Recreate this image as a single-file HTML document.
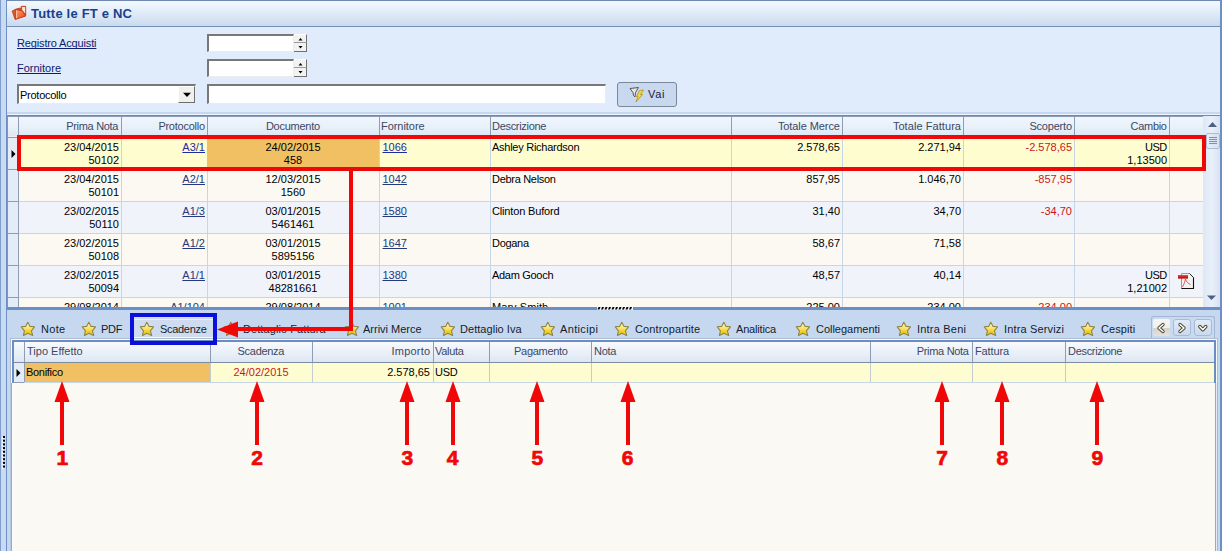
<!DOCTYPE html><html><head><meta charset="utf-8"><style>
*{box-sizing:border-box;margin:0;padding:0}
html,body{width:1222px;height:551px;overflow:hidden}
body{position:relative;background:#c8dbf3;font-family:"Liberation Sans",sans-serif;font-size:11px;color:#000}
.a{position:absolute}
.t{position:absolute;white-space:nowrap;line-height:13px;height:13px}
.lnk{color:#0b2170;text-decoration:underline;text-decoration-skip-ink:none}
.gl{color:#243a7c;text-decoration:underline;text-decoration-skip-ink:none}
.neg{color:#c81818}
.hdt{color:#3b4862}
svg{position:absolute;overflow:visible}
</style></head><body>
<div class="a" style="left:0px;top:0px;width:1px;height:551px;background:#7f9ecb"></div>
<div class="a" style="left:6px;top:0px;width:1px;height:551px;background:#6e8fc3"></div>
<div class="a" style="left:1220px;top:0px;width:2px;height:551px;background:#6e8fc3"></div>
<svg style="left:1px;top:436px" width="5" height="40"><rect x="1" y="1.0" width="2" height="2" fill="#fff"/><rect x="2" y="0.0" width="2" height="2" fill="#000"/><rect x="1" y="4.7" width="2" height="2" fill="#fff"/><rect x="2" y="3.7" width="2" height="2" fill="#000"/><rect x="1" y="8.4" width="2" height="2" fill="#fff"/><rect x="2" y="7.4" width="2" height="2" fill="#000"/><rect x="1" y="12.100000000000001" width="2" height="2" fill="#fff"/><rect x="2" y="11.100000000000001" width="2" height="2" fill="#000"/><rect x="1" y="15.8" width="2" height="2" fill="#fff"/><rect x="2" y="14.8" width="2" height="2" fill="#000"/><rect x="1" y="19.5" width="2" height="2" fill="#fff"/><rect x="2" y="18.5" width="2" height="2" fill="#000"/><rect x="1" y="23.200000000000003" width="2" height="2" fill="#fff"/><rect x="2" y="22.200000000000003" width="2" height="2" fill="#000"/><rect x="1" y="26.900000000000002" width="2" height="2" fill="#fff"/><rect x="2" y="25.900000000000002" width="2" height="2" fill="#000"/><rect x="1" y="30.6" width="2" height="2" fill="#fff"/><rect x="2" y="29.6" width="2" height="2" fill="#000"/></svg>
<div class="a" style="left:7px;top:0px;width:1213px;height:1px;background:#7189b0"></div>
<div class="a" style="left:7px;top:1px;width:1213px;height:25px;background:linear-gradient(#f2f8ff,#e4eef9 40%,#c9daee)"></div>
<div class="a" style="left:7px;top:26px;width:1213px;height:1px;background:#7590b6"></div>
<svg style="left:10px;top:4px" width="20" height="18" viewBox="0 0 20 18">
<defs><linearGradient id="fg" x1="0" y1="0" x2="1" y2="1"><stop offset="0" stop-color="#ffa070"/><stop offset="1" stop-color="#f03c10"/></linearGradient></defs>
<path d="M5.3 5.3 L9.3 4.2 L11.3 4.2 L11.3 2.3 L15.7 2.3 L15.7 11.8 L5.3 15.2 Z" fill="#d8461e" stroke="#b8381a" stroke-width="0.8" stroke-linejoin="round"/>
<path d="M11.9 2.9 L15.1 2.9 L15.1 9.5 L12.2 6 Z" fill="#ffe2d2"/>
<path d="M2.1 7 L5.3 5.6 L5.4 15.2 L4.8 14.6 Z" fill="#e8602c" stroke="#b8381a" stroke-width="0.8" stroke-linejoin="round"/>
<path d="M5.4 5.6 L9.2 6.2 L12.4 6.9 L15.4 11.5 L15.4 12.1 L5.4 15.4 Z" fill="url(#fg)" stroke="#c03a18" stroke-width="0.8" stroke-linejoin="round"/>
<rect x="6.1" y="6.6" width="1" height="7.5" fill="#ffc8a8"/>
</svg>
<div class="a" style="left:31px;top:6px;font-size:13px;font-weight:bold;color:#17408a;line-height:16px;white-space:nowrap;letter-spacing:0.2px">Tutte le FT e NC</div>
<div class="a" style="left:7px;top:27px;width:1213px;height:88px;background:#e0ebfb"></div>
<div class="a" style="left:7px;top:112px;width:1213px;height:2px;background:#c6d7f1"></div>
<div class="a" style="left:7px;top:114px;width:1213px;height:1px;background:#eef5fe"></div>
<div class="t lnk" style="left:17px;top:37px;letter-spacing:-0.149px;">Registro Acquisti</div>
<div class="t lnk" style="left:17px;top:62px;letter-spacing:-0.050px;letter-spacing:0px">Fornitore</div>
<div class="a" style="left:207px;top:34px;width:87px;height:18px;background:#fff;border-top:2px solid #787878;border-left:2px solid #787878;border-bottom:1px solid #ececec;border-right:1px solid #ececec"></div>
<div class="a" style="left:294px;top:34px;width:13px;height:9px;background:#f2f2f0;border-top:1px solid #fff;border-right:1px solid #707070;border-bottom:1px solid #9a9a9a"></div>
<div class="a" style="left:294px;top:43px;width:13px;height:9px;background:#f2f2f0;border-right:1px solid #707070;border-bottom:1px solid #707070"></div>
<svg style="left:297px;top:36px" width="7" height="14"><path d="M1.5 4.5 L3.5 2 L5.5 4.5Z" fill="#000"/><path d="M1.5 10 L3.5 12.5 L5.5 10Z" fill="#000"/></svg>
<div class="a" style="left:207px;top:59px;width:87px;height:18px;background:#fff;border-top:2px solid #787878;border-left:2px solid #787878;border-bottom:1px solid #ececec;border-right:1px solid #ececec"></div>
<div class="a" style="left:294px;top:59px;width:13px;height:9px;background:#f2f2f0;border-top:1px solid #fff;border-right:1px solid #707070;border-bottom:1px solid #9a9a9a"></div>
<div class="a" style="left:294px;top:68px;width:13px;height:9px;background:#f2f2f0;border-right:1px solid #707070;border-bottom:1px solid #707070"></div>
<svg style="left:297px;top:61px" width="7" height="14"><path d="M1.5 4.5 L3.5 2 L5.5 4.5Z" fill="#000"/><path d="M1.5 10 L3.5 12.5 L5.5 10Z" fill="#000"/></svg>
<div class="a" style="left:17px;top:84px;width:179px;height:20px;background:#fff;border-top:2px solid #787878;border-left:2px solid #787878;border-bottom:1px solid #ececec;border-right:1px solid #ececec"></div>
<div class="t " style="left:20px;top:88px;letter-spacing:-0.255px;top:89px">Protocollo</div>
<div class="a" style="left:178px;top:86px;width:17px;height:17px;background:#f0f0ee;border-top:1px solid #fff;border-left:1px solid #fff;border-right:1px solid #6e6e6e;border-bottom:1px solid #6e6e6e"></div>
<svg style="left:182px;top:91px" width="11" height="7"><path d="M1 1.8 L9 1.8 L5 6Z" fill="#000"/></svg>
<div class="a" style="left:207px;top:84px;width:399px;height:20px;background:#fff;border-top:2px solid #787878;border-left:2px solid #787878;border-bottom:1px solid #ececec;border-right:1px solid #ececec"></div>
<div class="a" style="left:617px;top:82px;width:60px;height:25px;border:1px solid #7b889c;border-radius:3px;background:#c8d8ee"></div>
<svg style="left:629px;top:86px" width="16" height="17" viewBox="0 0 16 17">
<path d="M1 2.5 L9.5 1.5 L6.5 6.5 L6 11 L4.5 9.5 L4 6.5Z" fill="#e6e6e6" stroke="#555" stroke-width="1"/>
<path d="M10.5 4.5 L14.5 4 L11.5 8.5 L13.5 8.5 L7 16 L9 10.5 L7.5 10.5Z" fill="#f3d83a" stroke="#a88b1a" stroke-width="0.7"/>
</svg>
<div class="t " style="left:648px;top:88px;letter-spacing:0.631px;color:#1a1a3a">Vai</div>
<div class="a" style="left:7px;top:115px;width:1213px;height:192px;overflow:hidden">
<div class="a" style="left:0px;top:0px;width:1213px;height:192px;background:#eff3f9"></div>
<div class="a" style="left:0px;top:0px;width:1213px;height:1px;background:#7388a6"></div>
<div class="a" style="left:0px;top:1px;width:1196px;height:21px;background:linear-gradient(#8c9db8 0,#8c9db8 1px,#f0f6fe 1px,#e8f0f9 55%,#dae6f4)"></div>
<div class="a" style="left:0px;top:21px;width:1196px;height:1px;background:#f6e9ec"></div>
<div class="a" style="left:0px;top:22px;width:1196px;height:1px;background:#8e9db3"></div>
<div class="a" style="left:11px;top:1px;width:1px;height:21px;background:#8e9db3"></div>
<div class="a" style="left:114px;top:1px;width:1px;height:21px;background:#8e9db3"></div>
<div class="a" style="left:200px;top:1px;width:1px;height:21px;background:#8e9db3"></div>
<div class="a" style="left:372px;top:1px;width:1px;height:21px;background:#8e9db3"></div>
<div class="a" style="left:483px;top:1px;width:1px;height:21px;background:#8e9db3"></div>
<div class="a" style="left:724px;top:1px;width:1px;height:21px;background:#8e9db3"></div>
<div class="a" style="left:835px;top:1px;width:1px;height:21px;background:#8e9db3"></div>
<div class="a" style="left:956px;top:1px;width:1px;height:21px;background:#8e9db3"></div>
<div class="a" style="left:1067px;top:1px;width:1px;height:21px;background:#8e9db3"></div>
<div class="a" style="left:1162px;top:1px;width:1px;height:21px;background:#8e9db3"></div>
<div class="a" style="left:11px;top:23px;width:1185px;height:31px;background:#fefdd0"></div>
<div class="a" style="left:0px;top:23px;width:11px;height:31px;background:#e4ecf7"></div>
<div class="a" style="left:0px;top:54px;width:11px;height:1px;background:#8e9db3"></div>
<div class="a" style="left:11px;top:54px;width:1185px;height:1px;background:#c7d5e8"></div>
<div class="a" style="left:11px;top:55px;width:1185px;height:31px;background:#fbf9f1"></div>
<div class="a" style="left:0px;top:55px;width:11px;height:31px;background:#e4ecf7"></div>
<div class="a" style="left:0px;top:86px;width:11px;height:1px;background:#8e9db3"></div>
<div class="a" style="left:11px;top:86px;width:1185px;height:1px;background:#c7d5e8"></div>
<div class="a" style="left:11px;top:87px;width:1185px;height:31px;background:#f0f3f9"></div>
<div class="a" style="left:0px;top:87px;width:11px;height:31px;background:#e4ecf7"></div>
<div class="a" style="left:0px;top:118px;width:11px;height:1px;background:#8e9db3"></div>
<div class="a" style="left:11px;top:118px;width:1185px;height:1px;background:#c7d5e8"></div>
<div class="a" style="left:11px;top:119px;width:1185px;height:31px;background:#fbf9f1"></div>
<div class="a" style="left:0px;top:119px;width:11px;height:31px;background:#e4ecf7"></div>
<div class="a" style="left:0px;top:150px;width:11px;height:1px;background:#8e9db3"></div>
<div class="a" style="left:11px;top:150px;width:1185px;height:1px;background:#c7d5e8"></div>
<div class="a" style="left:11px;top:151px;width:1185px;height:31px;background:#f0f3f9"></div>
<div class="a" style="left:0px;top:151px;width:11px;height:31px;background:#e4ecf7"></div>
<div class="a" style="left:0px;top:182px;width:11px;height:1px;background:#8e9db3"></div>
<div class="a" style="left:11px;top:182px;width:1185px;height:1px;background:#c7d5e8"></div>
<div class="a" style="left:11px;top:183px;width:1185px;height:31px;background:#fbf9f1"></div>
<div class="a" style="left:0px;top:183px;width:11px;height:31px;background:#e4ecf7"></div>
<div class="a" style="left:0px;top:214px;width:11px;height:1px;background:#8e9db3"></div>
<div class="a" style="left:11px;top:214px;width:1185px;height:1px;background:#c7d5e8"></div>
<div class="a" style="left:11px;top:1px;width:1px;height:191px;background:#8e9db3"></div>
<div class="a" style="left:0px;top:1px;width:1px;height:191px;background:#7696c6"></div>
<div class="a" style="left:114px;top:23px;width:1px;height:169px;background:#c7d5e8"></div>
<div class="a" style="left:200px;top:23px;width:1px;height:169px;background:#c7d5e8"></div>
<div class="a" style="left:372px;top:23px;width:1px;height:169px;background:#c7d5e8"></div>
<div class="a" style="left:483px;top:23px;width:1px;height:169px;background:#c7d5e8"></div>
<div class="a" style="left:724px;top:23px;width:1px;height:169px;background:#c7d5e8"></div>
<div class="a" style="left:835px;top:23px;width:1px;height:169px;background:#c7d5e8"></div>
<div class="a" style="left:956px;top:23px;width:1px;height:169px;background:#c7d5e8"></div>
<div class="a" style="left:1067px;top:23px;width:1px;height:169px;background:#c7d5e8"></div>
<div class="a" style="left:1162px;top:23px;width:1px;height:169px;background:#c7d5e8"></div>
<div class="a" style="left:200px;top:23px;width:172px;height:31px;background:#f0c062"></div>
<div class="t hdt" style="left:-188.8px;width:300px;top:5px;text-align:right;letter-spacing:-0.300px;">Prima Nota</div>
<div class="t hdt" style="left:-102.25520833333333px;width:300px;top:5px;text-align:right;letter-spacing:-0.255px;">Protocollo</div>
<div class="t hdt" style="left:185.86663818359375px;top:5px;width:200px;text-align:center;letter-spacing:-0.267px;">Documento</div>
<div class="t hdt" style="left:374px;top:5px;letter-spacing:-0.050px;">Fornitore</div>
<div class="t hdt" style="left:485px;top:5px;letter-spacing:-0.300px;">Descrizione</div>
<div class="t hdt" style="left:532.9224520596591px;width:300px;top:5px;text-align:right;letter-spacing:-0.078px;">Totale Merce</div>
<div class="t hdt" style="left:654.0662184495193px;width:300px;top:5px;text-align:right;letter-spacing:0.066px;">Totale Fattura</div>
<div class="t hdt" style="left:764.7986886160714px;width:300px;top:5px;text-align:right;letter-spacing:-0.201px;">Scoperto</div>
<div class="t hdt" style="left:859.7px;width:300px;top:5px;text-align:right;letter-spacing:-0.300px;">Cambio</div>
<svg style="left:4px;top:35px" width="5" height="8"><path d="M0.5 0 L4.5 4 L0.5 8Z" fill="#000"/></svg>
<div class="t " style="left:-188px;width:300px;top:26px;text-align:right;">23/04/2015</div>
<div class="t " style="left:-188px;width:300px;top:39px;text-align:right;">50102</div>
<div class="t gl" style="left:-102px;width:300px;top:26px;text-align:right;color:#1f2c9c">A3/1</div>
<div class="t " style="left:186.0px;top:26px;width:200px;text-align:center;">24/02/2015</div>
<div class="t " style="left:186.0px;top:39px;width:200px;text-align:center;">458</div>
<div class="t gl" style="left:375.5px;top:26px;color:#1f2c9c">1066</div>
<div class="t " style="left:485px;top:26px;letter-spacing:-0.262px;">Ashley Richardson</div>
<div class="t " style="left:533px;width:300px;top:26px;text-align:right;">2.578,65</div>
<div class="t " style="left:654px;width:300px;top:26px;text-align:right;">2.271,94</div>
<div class="t neg" style="left:765px;width:300px;top:26px;text-align:right;">-2.578,65</div>
<div class="t " style="left:859.7px;width:300px;top:26px;text-align:right;letter-spacing:-0.300px;letter-spacing:-0.5px">USD</div>
<div class="t " style="left:860px;width:300px;top:39px;text-align:right;">1,13500</div>
<div class="t " style="left:-188px;width:300px;top:58px;text-align:right;">23/04/2015</div>
<div class="t " style="left:-188px;width:300px;top:71px;text-align:right;">50101</div>
<div class="t gl" style="left:-102px;width:300px;top:58px;text-align:right;">A2/1</div>
<div class="t " style="left:186.0px;top:58px;width:200px;text-align:center;">12/03/2015</div>
<div class="t " style="left:186.0px;top:71px;width:200px;text-align:center;">1560</div>
<div class="t gl" style="left:375.5px;top:58px;">1042</div>
<div class="t " style="left:485px;top:58px;letter-spacing:-0.300px;">Debra Nelson</div>
<div class="t " style="left:533px;width:300px;top:58px;text-align:right;">857,95</div>
<div class="t " style="left:654px;width:300px;top:58px;text-align:right;">1.046,70</div>
<div class="t neg" style="left:765px;width:300px;top:58px;text-align:right;">-857,95</div>
<div class="t " style="left:-188px;width:300px;top:90px;text-align:right;">23/02/2015</div>
<div class="t " style="left:-188px;width:300px;top:103px;text-align:right;">50110</div>
<div class="t gl" style="left:-102px;width:300px;top:90px;text-align:right;">A1/3</div>
<div class="t " style="left:186.0px;top:90px;width:200px;text-align:center;">03/01/2015</div>
<div class="t " style="left:186.0px;top:103px;width:200px;text-align:center;">5461461</div>
<div class="t gl" style="left:375.5px;top:90px;">1580</div>
<div class="t " style="left:485px;top:90px;letter-spacing:-0.153px;">Clinton Buford</div>
<div class="t " style="left:533px;width:300px;top:90px;text-align:right;">31,40</div>
<div class="t " style="left:654px;width:300px;top:90px;text-align:right;">34,70</div>
<div class="t neg" style="left:765px;width:300px;top:90px;text-align:right;">-34,70</div>
<div class="t " style="left:-188px;width:300px;top:122px;text-align:right;">23/02/2015</div>
<div class="t " style="left:-188px;width:300px;top:135px;text-align:right;">50108</div>
<div class="t gl" style="left:-102px;width:300px;top:122px;text-align:right;">A1/2</div>
<div class="t " style="left:186.0px;top:122px;width:200px;text-align:center;">03/01/2015</div>
<div class="t " style="left:186.0px;top:135px;width:200px;text-align:center;">5895156</div>
<div class="t gl" style="left:375.5px;top:122px;">1647</div>
<div class="t " style="left:485px;top:122px;letter-spacing:-0.300px;">Dogana</div>
<div class="t " style="left:533px;width:300px;top:122px;text-align:right;">58,67</div>
<div class="t " style="left:654px;width:300px;top:122px;text-align:right;">71,58</div>
<div class="t " style="left:-188px;width:300px;top:154px;text-align:right;">23/02/2015</div>
<div class="t " style="left:-188px;width:300px;top:167px;text-align:right;">50094</div>
<div class="t gl" style="left:-102px;width:300px;top:154px;text-align:right;">A1/1</div>
<div class="t " style="left:186.0px;top:154px;width:200px;text-align:center;">03/01/2015</div>
<div class="t " style="left:186.0px;top:167px;width:200px;text-align:center;">48281661</div>
<div class="t gl" style="left:375.5px;top:154px;">1380</div>
<div class="t " style="left:485px;top:154px;letter-spacing:-0.300px;">Adam Gooch</div>
<div class="t " style="left:533px;width:300px;top:154px;text-align:right;">48,57</div>
<div class="t " style="left:654px;width:300px;top:154px;text-align:right;">40,14</div>
<div class="t " style="left:859.7px;width:300px;top:154px;text-align:right;letter-spacing:-0.300px;letter-spacing:-0.5px">USD</div>
<div class="t " style="left:860px;width:300px;top:167px;text-align:right;">1,21002</div>
<div class="t " style="left:-188px;width:300px;top:186px;text-align:right;">29/08/2014</div>
<div class="t gl" style="left:-102px;width:300px;top:186px;text-align:right;">A1/104</div>
<div class="t " style="left:186.0px;top:186px;width:200px;text-align:center;">29/08/2014</div>
<div class="t gl" style="left:375.5px;top:186px;">1001</div>
<div class="t " style="left:485px;top:186px;letter-spacing:0.056px;">Mary Smith</div>
<div class="t " style="left:533px;width:300px;top:186px;text-align:right;">225,00</div>
<div class="t " style="left:654px;width:300px;top:186px;text-align:right;">234,00</div>
<div class="t neg" style="left:765px;width:300px;top:186px;text-align:right;">-234,00</div>
<svg style="left:1170px;top:157px" width="18" height="18" viewBox="0 0 18 18">
<defs><linearGradient id="pg" x1="0" y1="0" x2="0" y2="1"><stop offset="0" stop-color="#ff4040"/><stop offset="1" stop-color="#b00000"/></linearGradient></defs>
<path d="M4.5 1.5 L12.5 1.5 L16.5 5.5 L16.5 16.5 L4.5 16.5 Z" fill="#f2f2f2" stroke="#9a9a9a" stroke-width="1"/>
<path d="M16.5 5.5 L16.5 16.5 L4.5 16.5" fill="none" stroke="#111" stroke-width="1.1"/>
<path d="M12.5 1.5 L16.5 5.5" fill="none" stroke="#222" stroke-width="1"/>
<path d="M5.5 15 C7 12 8 9.5 8.5 7 C9.3 9.5 11 11.5 13.5 12.5" fill="none" stroke="#d05050" stroke-width="0.9"/>
<rect x="1" y="3" width="10" height="3.6" fill="url(#pg)"/>
</svg>
<div class="a" style="left:1196px;top:1px;width:17px;height:191px;background:linear-gradient(90deg,#dde7f5,#e9f0f9 50%,#d8e3f2)"></div>
<svg style="left:1200px;top:6px" width="11" height="7"><path d="M1 6 L5.5 1 L10 6Z" fill="#4d6185"/></svg>
<div class="a" style="left:1199px;top:18px;width:14px;height:16px;background:linear-gradient(90deg,#e8eff9,#d4e0f1);border:1px solid #a9bbd7;border-radius:2px"></div>
<div class="a" style="left:1202px;top:22px;width:8px;height:1px;background:#7e90ad"></div>
<div class="a" style="left:1202px;top:24px;width:8px;height:1px;background:#7e90ad"></div>
<div class="a" style="left:1202px;top:26px;width:8px;height:1px;background:#7e90ad"></div>
<div class="a" style="left:1202px;top:28px;width:8px;height:1px;background:#7e90ad"></div>
<svg style="left:1199px;top:180px" width="11" height="6"><path d="M1 0.5 L10 0.5 L5.5 5Z" fill="#4d6185"/></svg>
</div>
<div class="a" style="left:7px;top:307px;width:1213px;height:3px;background:#6a8ec6"></div>
<svg style="left:597px;top:307px" width="36" height="3"><rect x="0" y="0" width="36" height="3" fill="#f4f6fa"/><path d="M0.5 2.5 L1.5 0 L3.5 0 L2.5 2.5Z" fill="#000"/><path d="M4.0 2.5 L5.0 0 L7.0 0 L6.0 2.5Z" fill="#000"/><path d="M7.5 2.5 L8.5 0 L10.5 0 L9.5 2.5Z" fill="#000"/><path d="M11.0 2.5 L12.0 0 L14.0 0 L13.0 2.5Z" fill="#000"/><path d="M14.5 2.5 L15.5 0 L17.5 0 L16.5 2.5Z" fill="#000"/><path d="M18.0 2.5 L19.0 0 L21.0 0 L20.0 2.5Z" fill="#000"/><path d="M21.5 2.5 L22.5 0 L24.5 0 L23.5 2.5Z" fill="#000"/><path d="M25.0 2.5 L26.0 0 L28.0 0 L27.0 2.5Z" fill="#000"/><path d="M28.5 2.5 L29.5 0 L31.5 0 L30.5 2.5Z" fill="#000"/><path d="M32.0 2.5 L33.0 0 L35.0 0 L34.0 2.5Z" fill="#000"/></svg>
<div class="a" style="left:7px;top:310px;width:1213px;height:241px;background:#c6d8f0"></div>
<svg width="0" height="0" style="left:0;top:0"><defs><linearGradient id="sg" x1="0" y1="0" x2="0" y2="1"><stop offset="0" stop-color="#fffbd8"/><stop offset="0.5" stop-color="#f8e060"/><stop offset="0.75" stop-color="#f0cc18"/><stop offset="1" stop-color="#e8d050"/></linearGradient></defs></svg>
<div class="a" style="left:134px;top:317px;width:79px;height:23px;background:#cfdcef"></div>
<div class="a" style="left:134px;top:319px;width:79px;height:1px;background:#e6eef9"></div>
<div class="a" style="left:134px;top:337px;width:79px;height:3px;background:#f4f8fd"></div>
<svg style="left:20px;top:321px" width="16" height="16" viewBox="0 0 16 16">
<path d="M7.8 1.2 L10.1 5.4 L14.5 5.8 L11.4 9.8 L12.7 14.4 L7.8 12.3 L3.5 14.4 L4.4 9.8 L1.3 5.8 L5.6 5.4Z" fill="url(#sg)" stroke="#8f8448" stroke-width="1.1" stroke-linejoin="round"/>
</svg>
<div class="t " style="left:41px;top:323px;letter-spacing:0.294px;color:#141c2c">Note</div>
<svg style="left:81px;top:321px" width="16" height="16" viewBox="0 0 16 16">
<path d="M7.8 1.2 L10.1 5.4 L14.5 5.8 L11.4 9.8 L12.7 14.4 L7.8 12.3 L3.5 14.4 L4.4 9.8 L1.3 5.8 L5.6 5.4Z" fill="url(#sg)" stroke="#8f8448" stroke-width="1.1" stroke-linejoin="round"/>
</svg>
<div class="t " style="left:101px;top:323px;letter-spacing:-0.300px;color:#141c2c">PDF</div>
<svg style="left:139px;top:321px" width="16" height="16" viewBox="0 0 16 16">
<path d="M7.8 1.2 L10.1 5.4 L14.5 5.8 L11.4 9.8 L12.7 14.4 L7.8 12.3 L3.5 14.4 L4.4 9.8 L1.3 5.8 L5.6 5.4Z" fill="url(#sg)" stroke="#8f8448" stroke-width="1.1" stroke-linejoin="round"/>
</svg>
<div class="t " style="left:160px;top:323px;letter-spacing:-0.300px;color:#141c2c">Scadenze</div>
<svg style="left:223px;top:321px" width="16" height="16" viewBox="0 0 16 16">
<path d="M7.8 1.2 L10.1 5.4 L14.5 5.8 L11.4 9.8 L12.7 14.4 L7.8 12.3 L3.5 14.4 L4.4 9.8 L1.3 5.8 L5.6 5.4Z" fill="url(#sg)" stroke="#8f8448" stroke-width="1.1" stroke-linejoin="round"/>
</svg>
<div class="t " style="left:243px;top:323px;letter-spacing:0.081px;color:#141c2c">Dettaglio Fattura</div>
<svg style="left:344px;top:321px" width="16" height="16" viewBox="0 0 16 16">
<path d="M7.8 1.2 L10.1 5.4 L14.5 5.8 L11.4 9.8 L12.7 14.4 L7.8 12.3 L3.5 14.4 L4.4 9.8 L1.3 5.8 L5.6 5.4Z" fill="url(#sg)" stroke="#8f8448" stroke-width="1.1" stroke-linejoin="round"/>
</svg>
<div class="t " style="left:363px;top:323px;letter-spacing:-0.005px;color:#141c2c">Arrivi Merce</div>
<svg style="left:440px;top:321px" width="16" height="16" viewBox="0 0 16 16">
<path d="M7.8 1.2 L10.1 5.4 L14.5 5.8 L11.4 9.8 L12.7 14.4 L7.8 12.3 L3.5 14.4 L4.4 9.8 L1.3 5.8 L5.6 5.4Z" fill="url(#sg)" stroke="#8f8448" stroke-width="1.1" stroke-linejoin="round"/>
</svg>
<div class="t " style="left:460px;top:323px;letter-spacing:0.039px;color:#141c2c">Dettaglio Iva</div>
<svg style="left:540px;top:321px" width="16" height="16" viewBox="0 0 16 16">
<path d="M7.8 1.2 L10.1 5.4 L14.5 5.8 L11.4 9.8 L12.7 14.4 L7.8 12.3 L3.5 14.4 L4.4 9.8 L1.3 5.8 L5.6 5.4Z" fill="url(#sg)" stroke="#8f8448" stroke-width="1.1" stroke-linejoin="round"/>
</svg>
<div class="t " style="left:560px;top:323px;letter-spacing:0.355px;color:#141c2c">Anticipi</div>
<svg style="left:614px;top:321px" width="16" height="16" viewBox="0 0 16 16">
<path d="M7.8 1.2 L10.1 5.4 L14.5 5.8 L11.4 9.8 L12.7 14.4 L7.8 12.3 L3.5 14.4 L4.4 9.8 L1.3 5.8 L5.6 5.4Z" fill="url(#sg)" stroke="#8f8448" stroke-width="1.1" stroke-linejoin="round"/>
</svg>
<div class="t " style="left:635px;top:323px;letter-spacing:0.127px;color:#141c2c">Contropartite</div>
<svg style="left:716px;top:321px" width="16" height="16" viewBox="0 0 16 16">
<path d="M7.8 1.2 L10.1 5.4 L14.5 5.8 L11.4 9.8 L12.7 14.4 L7.8 12.3 L3.5 14.4 L4.4 9.8 L1.3 5.8 L5.6 5.4Z" fill="url(#sg)" stroke="#8f8448" stroke-width="1.1" stroke-linejoin="round"/>
</svg>
<div class="t " style="left:736px;top:323px;letter-spacing:-0.182px;color:#141c2c">Analitica</div>
<svg style="left:795px;top:321px" width="16" height="16" viewBox="0 0 16 16">
<path d="M7.8 1.2 L10.1 5.4 L14.5 5.8 L11.4 9.8 L12.7 14.4 L7.8 12.3 L3.5 14.4 L4.4 9.8 L1.3 5.8 L5.6 5.4Z" fill="url(#sg)" stroke="#8f8448" stroke-width="1.1" stroke-linejoin="round"/>
</svg>
<div class="t " style="left:816px;top:323px;letter-spacing:-0.023px;color:#141c2c">Collegamenti</div>
<svg style="left:896px;top:321px" width="16" height="16" viewBox="0 0 16 16">
<path d="M7.8 1.2 L10.1 5.4 L14.5 5.8 L11.4 9.8 L12.7 14.4 L7.8 12.3 L3.5 14.4 L4.4 9.8 L1.3 5.8 L5.6 5.4Z" fill="url(#sg)" stroke="#8f8448" stroke-width="1.1" stroke-linejoin="round"/>
</svg>
<div class="t " style="left:917px;top:323px;letter-spacing:0.207px;color:#141c2c">Intra Beni</div>
<svg style="left:983px;top:321px" width="16" height="16" viewBox="0 0 16 16">
<path d="M7.8 1.2 L10.1 5.4 L14.5 5.8 L11.4 9.8 L12.7 14.4 L7.8 12.3 L3.5 14.4 L4.4 9.8 L1.3 5.8 L5.6 5.4Z" fill="url(#sg)" stroke="#8f8448" stroke-width="1.1" stroke-linejoin="round"/>
</svg>
<div class="t " style="left:1004px;top:323px;letter-spacing:0.156px;color:#141c2c">Intra Servizi</div>
<svg style="left:1080px;top:321px" width="16" height="16" viewBox="0 0 16 16">
<path d="M7.8 1.2 L10.1 5.4 L14.5 5.8 L11.4 9.8 L12.7 14.4 L7.8 12.3 L3.5 14.4 L4.4 9.8 L1.3 5.8 L5.6 5.4Z" fill="url(#sg)" stroke="#8f8448" stroke-width="1.1" stroke-linejoin="round"/>
</svg>
<div class="t " style="left:1101px;top:323px;letter-spacing:0.087px;color:#141c2c">Cespiti</div>
<div class="a" style="left:1151px;top:316px;width:64px;height:22px;border:1px solid #a3b6d2;border-bottom:none;border-radius:3px 3px 0 0;background:#c8d9f0"></div>
<div class="a" style="left:1153px;top:319px;width:17px;height:17px;background:linear-gradient(#f6f5f3 0,#efefed 50%,#d4d0ca 52%,#e6e2dc 100%);border-radius:2px"></div>
<div class="a" style="left:1173px;top:319px;width:18px;height:17px;background:linear-gradient(#e2ecf9,#c9d9f0);border:1px solid #a8bad4;border-radius:3px"></div>
<div class="a" style="left:1194px;top:319px;width:18px;height:17px;background:linear-gradient(#e2ecf9,#c9d9f0);border:1px solid #a8bad4;border-radius:3px"></div>
<svg style="left:1157px;top:323px" width="12" height="12"><path d="M6 1.5 L2 5 L6 8.5" fill="none" stroke="#4e4424" stroke-width="3.4" stroke-linejoin="round" stroke-linecap="round"/><path d="M6 1.5 L2 5 L6 8.5" fill="none" stroke="#fff" stroke-width="1.5" stroke-linejoin="round" stroke-linecap="round"/></svg>
<svg style="left:1178px;top:323px" width="12" height="12"><path d="M2 1.5 L6 5 L2 8.5" fill="none" stroke="#4e4424" stroke-width="3.4" stroke-linejoin="round" stroke-linecap="round"/><path d="M2 1.5 L6 5 L2 8.5" fill="none" stroke="#fff" stroke-width="1.5" stroke-linejoin="round" stroke-linecap="round"/></svg>
<svg style="left:1198px;top:324px" width="12" height="12"><path d="M1.8 2.5 L4.8 5.8 L7.8 2.5" fill="none" stroke="#4e4424" stroke-width="3.4" stroke-linejoin="round" stroke-linecap="round"/><path d="M1.8 2.5 L4.8 5.8 L7.8 2.5" fill="none" stroke="#fff" stroke-width="1.5" stroke-linejoin="round" stroke-linecap="round"/></svg>
<div class="a" style="left:10px;top:338px;width:1208px;height:213px;background:#faf9f3;border-left:1px solid #aebdd4;border-top:1px solid #aebdd4;border-right:1px solid #aebdd4"></div>
<div class="a" style="left:11px;top:339px;width:1206px;height:44px;border-left:1px solid #f8fbff;border-top:1px solid #f8fbff;border-right:1px solid #f8fbff"></div>
<div class="a" style="left:12px;top:340px;width:1204px;height:43px;border-left:2px solid #6c8dc2;border-top:2px solid #6c8dc2;border-right:2px solid #6c8dc2"></div>
<div class="a" style="left:10px;top:383px;width:1px;height:168px;background:#b8c8de"></div>
<div class="a" style="left:11px;top:383px;width:1px;height:168px;background:#98a8c0"></div>
<div class="a" style="left:12px;top:383px;width:1px;height:168px;background:#fafcfe"></div>
<div class="a" style="left:1215px;top:383px;width:1px;height:168px;background:#98a8c0"></div>
<div class="a" style="left:1216px;top:383px;width:1px;height:168px;background:#e4ebf4"></div>
<div class="a" style="left:1217px;top:383px;width:1px;height:168px;background:#a8b8d0"></div>
<div class="a" style="left:14px;top:342px;width:1200px;height:20px;background:linear-gradient(#f7f9fd,#eaf0f8 55%,#dce6f3)"></div>
<div class="a" style="left:14px;top:362px;width:1200px;height:1px;background:#7e8ca0"></div>
<div class="a" style="left:24px;top:342px;width:1px;height:20px;background:#8e9db3"></div>
<div class="a" style="left:210px;top:342px;width:1px;height:20px;background:#8e9db3"></div>
<div class="a" style="left:312px;top:342px;width:1px;height:20px;background:#8e9db3"></div>
<div class="a" style="left:433px;top:342px;width:1px;height:20px;background:#8e9db3"></div>
<div class="a" style="left:489px;top:342px;width:1px;height:20px;background:#8e9db3"></div>
<div class="a" style="left:591px;top:342px;width:1px;height:20px;background:#8e9db3"></div>
<div class="a" style="left:870px;top:342px;width:1px;height:20px;background:#8e9db3"></div>
<div class="a" style="left:972px;top:342px;width:1px;height:20px;background:#8e9db3"></div>
<div class="a" style="left:1065px;top:342px;width:1px;height:20px;background:#8e9db3"></div>
<div class="a" style="left:25px;top:363px;width:1189px;height:19px;background:#fefdd2"></div>
<div class="a" style="left:14px;top:363px;width:10px;height:19px;background:#e4ecf7"></div>
<div class="a" style="left:24px;top:363px;width:1px;height:19px;background:#8e9db3"></div>
<div class="a" style="left:210px;top:363px;width:1px;height:19px;background:#c4ccd0"></div>
<div class="a" style="left:312px;top:363px;width:1px;height:19px;background:#c4ccd0"></div>
<div class="a" style="left:433px;top:363px;width:1px;height:19px;background:#c4ccd0"></div>
<div class="a" style="left:489px;top:363px;width:1px;height:19px;background:#c4ccd0"></div>
<div class="a" style="left:591px;top:363px;width:1px;height:19px;background:#c4ccd0"></div>
<div class="a" style="left:870px;top:363px;width:1px;height:19px;background:#c4ccd0"></div>
<div class="a" style="left:972px;top:363px;width:1px;height:19px;background:#c4ccd0"></div>
<div class="a" style="left:1065px;top:363px;width:1px;height:19px;background:#c4ccd0"></div>
<div class="a" style="left:14px;top:382px;width:10px;height:1px;background:#8e9db3"></div>
<div class="a" style="left:24px;top:382px;width:1190px;height:1px;background:#c7d5e8"></div>
<div class="a" style="left:25px;top:363px;width:185px;height:19px;background:#f0c062"></div>
<svg style="left:16px;top:369px" width="5" height="8"><path d="M0.5 0 L4.5 4 L0.5 8Z" fill="#000"/></svg>
<div class="t hdt" style="left:27px;top:345px;letter-spacing:0.007px;">Tipo Effetto</div>
<div class="t hdt" style="left:160.85px;top:345px;width:200px;text-align:center;letter-spacing:-0.300px;">Scadenza</div>
<div class="t hdt" style="left:130.1876953125px;width:300px;top:345px;text-align:right;letter-spacing:0.188px;">Importo</div>
<div class="t hdt" style="left:435px;top:345px;letter-spacing:-0.300px;">Valuta</div>
<div class="t hdt" style="left:440.85px;top:345px;width:200px;text-align:center;letter-spacing:-0.300px;">Pagamento</div>
<div class="t hdt" style="left:594px;top:345px;letter-spacing:-0.300px;">Nota</div>
<div class="t hdt" style="left:668.7px;width:300px;top:345px;text-align:right;letter-spacing:-0.300px;">Prima Nota</div>
<div class="t hdt" style="left:975px;top:345px;letter-spacing:-0.122px;">Fattura</div>
<div class="t hdt" style="left:1068px;top:345px;letter-spacing:-0.300px;">Descrizione</div>
<div class="t " style="left:26px;top:366px;letter-spacing:-0.300px;">Bonifico</div>
<div class="t neg" style="left:161.0px;top:366px;width:200px;text-align:center;">24/02/2015</div>
<div class="t " style="left:130px;width:300px;top:366px;text-align:right;">2.578,65</div>
<div class="t " style="left:435px;top:366px;letter-spacing:-0.300px;">USD</div>
<div class="a" style="left:17px;top:135px;width:1189px;height:36px;border:4px solid #f00808"></div>
<div class="a" style="left:349px;top:170px;width:4px;height:161px;background:#f00808"></div>
<div class="a" style="left:236px;top:327px;width:117px;height:4px;background:#f00808"></div>
<svg style="left:216px;top:320px" width="24" height="19"><path d="M1 9.5 L22 1.5 L22 17.5Z" fill="#f00808"/></svg>
<div class="a" style="left:130px;top:313px;width:87px;height:32px;border:4px solid #0a0fdc"></div>
<svg style="left:54.3px;top:381px" width="16" height="64"><path d="M8 0 L15.5 21 L0.5 21Z" fill="#f00808"/><rect x="6" y="20" width="4" height="44" fill="#f00808"/></svg>
<div class="a" style="left:47.3px;top:447px;width:30px;text-align:center;font-size:21px;font-weight:bold;color:#f00808;line-height:22px;-webkit-text-stroke:0.7px #f00808">1</div>
<svg style="left:249.2px;top:381px" width="16" height="64"><path d="M8 0 L15.5 21 L0.5 21Z" fill="#f00808"/><rect x="6" y="20" width="4" height="44" fill="#f00808"/></svg>
<div class="a" style="left:242.2px;top:447px;width:30px;text-align:center;font-size:21px;font-weight:bold;color:#f00808;line-height:22px;-webkit-text-stroke:0.7px #f00808">2</div>
<svg style="left:399.3px;top:381px" width="16" height="64"><path d="M8 0 L15.5 21 L0.5 21Z" fill="#f00808"/><rect x="6" y="20" width="4" height="44" fill="#f00808"/></svg>
<div class="a" style="left:392.3px;top:447px;width:30px;text-align:center;font-size:21px;font-weight:bold;color:#f00808;line-height:22px;-webkit-text-stroke:0.7px #f00808">3</div>
<svg style="left:444.7px;top:381px" width="16" height="64"><path d="M8 0 L15.5 21 L0.5 21Z" fill="#f00808"/><rect x="6" y="20" width="4" height="44" fill="#f00808"/></svg>
<div class="a" style="left:437.7px;top:447px;width:30px;text-align:center;font-size:21px;font-weight:bold;color:#f00808;line-height:22px;-webkit-text-stroke:0.7px #f00808">4</div>
<svg style="left:529.4px;top:381px" width="16" height="64"><path d="M8 0 L15.5 21 L0.5 21Z" fill="#f00808"/><rect x="6" y="20" width="4" height="44" fill="#f00808"/></svg>
<div class="a" style="left:522.4px;top:447px;width:30px;text-align:center;font-size:21px;font-weight:bold;color:#f00808;line-height:22px;-webkit-text-stroke:0.7px #f00808">5</div>
<svg style="left:619.5px;top:381px" width="16" height="64"><path d="M8 0 L15.5 21 L0.5 21Z" fill="#f00808"/><rect x="6" y="20" width="4" height="44" fill="#f00808"/></svg>
<div class="a" style="left:612.5px;top:447px;width:30px;text-align:center;font-size:21px;font-weight:bold;color:#f00808;line-height:22px;-webkit-text-stroke:0.7px #f00808">6</div>
<svg style="left:934.2px;top:381px" width="16" height="64"><path d="M8 0 L15.5 21 L0.5 21Z" fill="#f00808"/><rect x="6" y="20" width="4" height="44" fill="#f00808"/></svg>
<div class="a" style="left:927.2px;top:447px;width:30px;text-align:center;font-size:21px;font-weight:bold;color:#f00808;line-height:22px;-webkit-text-stroke:0.7px #f00808">7</div>
<svg style="left:994.3px;top:381px" width="16" height="64"><path d="M8 0 L15.5 21 L0.5 21Z" fill="#f00808"/><rect x="6" y="20" width="4" height="44" fill="#f00808"/></svg>
<div class="a" style="left:987.3px;top:447px;width:30px;text-align:center;font-size:21px;font-weight:bold;color:#f00808;line-height:22px;-webkit-text-stroke:0.7px #f00808">8</div>
<svg style="left:1089.3px;top:381px" width="16" height="64"><path d="M8 0 L15.5 21 L0.5 21Z" fill="#f00808"/><rect x="6" y="20" width="4" height="44" fill="#f00808"/></svg>
<div class="a" style="left:1082.3px;top:447px;width:30px;text-align:center;font-size:21px;font-weight:bold;color:#f00808;line-height:22px;-webkit-text-stroke:0.7px #f00808">9</div>
</body></html>
